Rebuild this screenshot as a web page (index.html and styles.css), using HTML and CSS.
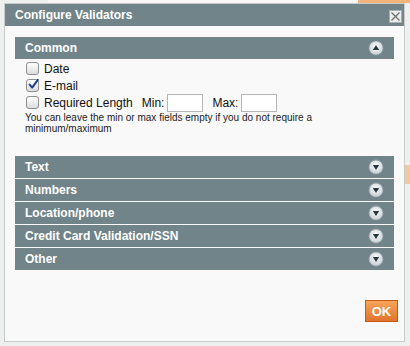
FILE: index.html
```html
<!DOCTYPE html>
<html>
<head>
<meta charset="utf-8">
<link rel="stylesheet" href="styles.css">
</head>
<body>
<div class="dialog">
  <div class="titlebar">
    <span class="title">Configure Validators</span>
    <span class="close"><svg width="11" height="11" viewBox="0 0 11 11"><path d="M1.5 1.5 L9.5 9.5 M9.5 1.5 L1.5 9.5" stroke="#6b6f70" stroke-width="1.2" fill="none"/></svg></span>
  </div>
  <div class="body">
    <div class="section">
      <div class="head"><span>Common</span>
        <svg class="toggle" width="16" height="16" viewBox="0 0 16 16"><defs><radialGradient id="g1" cx="0.5" cy="0.4" r="0.6"><stop offset="0" stop-color="#ffffff"/><stop offset="1" stop-color="#c9d1d4"/></radialGradient></defs><circle cx="8" cy="8" r="7.5" fill="#8fa0a5"/><circle cx="8" cy="8" r="6.6" fill="url(#g1)"/><path d="M4.8 10 L11.2 10 L8 5 Z" fill="#263840"/></svg>
      </div>
      <div class="content">
        <div class="row"><span class="cb"></span><span class="lbl">Date</span></div>
        <div class="row"><span class="cb"><svg width="13" height="13" viewBox="0 0 13 13"><path d="M2.6 6.6 L5.2 9.6 L10.8 1.8" stroke="#1d3f8a" stroke-width="2" fill="none" stroke-linecap="round" stroke-linejoin="round"/></svg></span><span class="lbl">E-mail</span></div>
        <div class="row"><span class="cb"></span><span class="lbl">Required Length</span><span class="small-lbl min">Min:</span><input class="num" type="text"><span class="small-lbl max">Max:</span><input class="num" type="text"></div>
        <p class="help">You can leave the min or max fields empty if you do not require a minimum/maximum</p>
      </div>
    </div>
    <div class="section"><div class="head"><span>Text</span><svg class="toggle" width="16" height="16" viewBox="0 0 16 16"><circle cx="8" cy="8" r="7.5" fill="#8fa0a5"/><circle cx="8" cy="8" r="6.6" fill="url(#g1)"/><path d="M4.8 6 L11.2 6 L8 11 Z" fill="#263840"/></svg></div></div>
    <div class="section"><div class="head"><span>Numbers</span><svg class="toggle" width="16" height="16" viewBox="0 0 16 16"><circle cx="8" cy="8" r="7.5" fill="#8fa0a5"/><circle cx="8" cy="8" r="6.6" fill="url(#g1)"/><path d="M4.8 6 L11.2 6 L8 11 Z" fill="#263840"/></svg></div></div>
    <div class="section"><div class="head"><span>Location/phone</span><svg class="toggle" width="16" height="16" viewBox="0 0 16 16"><circle cx="8" cy="8" r="7.5" fill="#8fa0a5"/><circle cx="8" cy="8" r="6.6" fill="url(#g1)"/><path d="M4.8 6 L11.2 6 L8 11 Z" fill="#263840"/></svg></div></div>
    <div class="section"><div class="head"><span>Credit Card Validation/SSN</span><svg class="toggle" width="16" height="16" viewBox="0 0 16 16"><circle cx="8" cy="8" r="7.5" fill="#8fa0a5"/><circle cx="8" cy="8" r="6.6" fill="url(#g1)"/><path d="M4.8 6 L11.2 6 L8 11 Z" fill="#263840"/></svg></div></div>
    <div class="section"><div class="head"><span>Other</span><svg class="toggle" width="16" height="16" viewBox="0 0 16 16"><circle cx="8" cy="8" r="7.5" fill="#8fa0a5"/><circle cx="8" cy="8" r="6.6" fill="url(#g1)"/><path d="M4.8 6 L11.2 6 L8 11 Z" fill="#263840"/></svg></div></div>
    <div class="footer"><button class="ok">OK</button></div>
  </div>
</div>
</body>
</html>
```
FILE: styles.css
```css
html, body {
  margin: 0;
  padding: 0;
}
body {
  width: 410px;
  height: 346px;
  overflow: hidden;
  font-family: "Liberation Sans", Arial, sans-serif;
  background-color: #eef0f0;
  background-image:
    linear-gradient(#f3b47c, #f3b47c),
    linear-gradient(#f0c9a4, #f0c9a4),
    linear-gradient(#f7f7f7, #f7f7f7);
  background-repeat: no-repeat;
  background-position: 358px 0, 405px 165px, 48px 0;
  background-size: 52px 3px, 5px 19px, 310px 3px;
  padding-top: 3px;
  padding-left: 4px;
  box-sizing: border-box;
}
.dialog {
  width: 401px;
  box-sizing: border-box;
  border: 1px solid #c9cbcb;
  background: #f9f9f9;
}
.titlebar {
  height: 22px;
  background: #718489;
  display: flex;
  align-items: center;
  justify-content: space-between;
  padding: 0 2px 0 10px;
}
.title {
  color: #fff;
  font-weight: bold;
  font-size: 12px;
}
.close {
  width: 11px;
  height: 11px;
  border: 1px solid #a7b1b3;
  background: #eceeee;
  display: flex;
  align-items: center;
  justify-content: center;
  margin-top: 2px;
}
.close svg { display: block; }
.body {
  padding: 11px 10px 19px 10px;
}
.section {
  margin-bottom: 1px;
}
.head {
  height: 22px;
  background: #718489;
  color: #fff;
  font-weight: bold;
  font-size: 12px;
  display: flex;
  align-items: center;
  justify-content: space-between;
  padding: 0 10px 0 10px;
}
.toggle { display: block; }
.content {
  padding: 1px 0 21px 10px;
}
.row {
  display: flex;
  align-items: center;
  height: 17px;
  font-size: 12px;
  color: #111;
}
.cb {
  width: 11px;
  height: 11px;
  margin-left: 1px;
  margin-right: 5px;
  border: 1px solid #8f8f8f;
  border-radius: 3px;
  background: linear-gradient(#ffffff, #dcdcdc);
  position: relative;
  flex: none;
}
.cb svg {
  position: absolute;
  left: 0;
  top: -2px;
}
.small-lbl {
  font-size: 12px;
}
.min { margin-left: 9px; margin-right: 3px; }
.max { margin-left: 9px; margin-right: 3px; }
.num {
  width: 36px;
  height: 18px;
  box-sizing: border-box;
  border: 1px solid #b5b5b5;
  background: #fff;
  padding: 0;
  margin: 0;
  font-size: 12px;
}
.help {
  margin: 1px 0 0 0;
  font-size: 10px;
  line-height: 11px;
  color: #222;
  width: 300px;
}
.footer {
  display: flex;
  justify-content: flex-end;
  padding-top: 29px;
  margin-right: -4px;
}
.ok {
  width: 33px;
  height: 22px;
  border: 1px solid #c45a12;
  background: linear-gradient(#f5a55a, #e2742a);
  color: #fff;
  font-family: "Liberation Sans", Arial, sans-serif;
  font-weight: bold;
  font-size: 13px;
  padding: 0;
  margin: 0;
}
```
